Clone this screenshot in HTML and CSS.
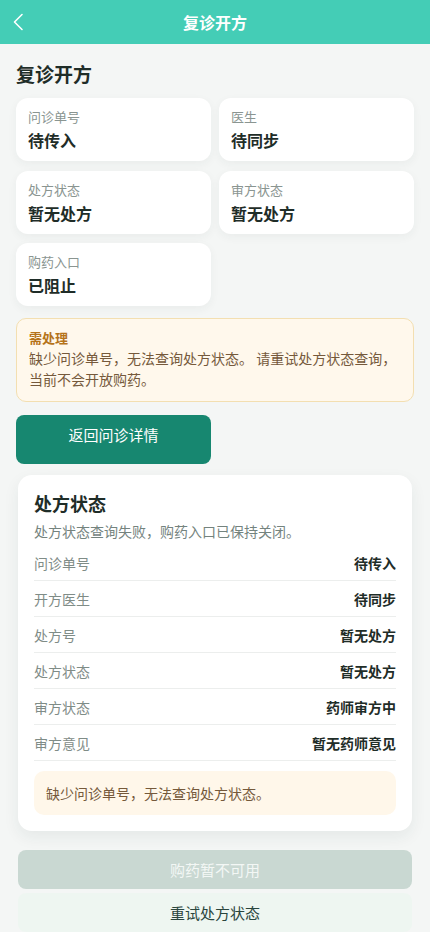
FILE: index.html
```html
<!DOCTYPE html>
<html lang="zh-CN">
<head>
<meta charset="utf-8">
<meta name="viewport" content="width=device-width, initial-scale=1">
<title>复诊开方</title>
<link rel="stylesheet" href="styles.css">
</head>
<body>
<header class="topbar">
  <button class="back" aria-label="返回">
    <svg width="12" height="18" viewBox="0 0 12 18"><path d="M10 1.5 L2.5 9 L10 16.5" fill="none" stroke="#fff" stroke-width="1.6" stroke-linecap="round" stroke-linejoin="round"/></svg>
  </button>
  <div class="topbar-title">复诊开方</div>
</header>
<main class="page">
  <h1 class="page-title">复诊开方</h1>
  <div class="stats">
    <div class="stat"><div class="stat-label">问诊单号</div><div class="stat-value">待传入</div></div>
    <div class="stat"><div class="stat-label">医生</div><div class="stat-value">待同步</div></div>
    <div class="stat"><div class="stat-label">处方状态</div><div class="stat-value">暂无处方</div></div>
    <div class="stat"><div class="stat-label">审方状态</div><div class="stat-value">暂无处方</div></div>
    <div class="stat"><div class="stat-label">购药入口</div><div class="stat-value">已阻止</div></div>
  </div>
  <div class="alert">
    <div class="alert-title">需处理</div>
    <div class="alert-text">缺少问诊单号，无法查询处方状态。 请重试处方状态查询，当前不会开放购药。</div>
  </div>
  <button class="btn-primary">返回问诊详情</button>
  <section class="card">
    <h2 class="card-title">处方状态</h2>
    <p class="card-sub">处方状态查询失败，购药入口已保持关闭。</p>
    <div class="rows">
      <div class="row"><span class="row-k">问诊单号</span><span class="row-v">待传入</span></div>
      <div class="row"><span class="row-k">开方医生</span><span class="row-v">待同步</span></div>
      <div class="row"><span class="row-k">处方号</span><span class="row-v">暂无处方</span></div>
      <div class="row"><span class="row-k">处方状态</span><span class="row-v">暂无处方</span></div>
      <div class="row"><span class="row-k">审方状态</span><span class="row-v">药师审方中</span></div>
      <div class="row"><span class="row-k">审方意见</span><span class="row-v">暂无药师意见</span></div>
    </div>
    <div class="note">缺少问诊单号，无法查询处方状态。</div>
  </section>
  <div class="actions">
    <button class="btn-disabled" disabled>购药暂不可用</button>
    <button class="btn-soft">重试处方状态</button>
  </div>
</main>
</body>
</html>
```
FILE: styles.css
```css
* { box-sizing: border-box; }
html, body { margin: 0; padding: 0; }
body {
  background: #f4f6f5;
  font-family: "Noto Sans CJK SC", "Noto Sans", sans-serif;
  color: #1f2d28;
}
button { font-family: inherit; border: 0; cursor: pointer; }
.topbar {
  height: 44px;
  background: #44cdb6;
  display: flex;
  align-items: center;
  justify-content: center;
  position: relative;
}
.back {
  position: absolute;
  left: 12px;
  top: 13px;
  width: 14px;
  height: 18px;
  padding: 0;
  background: transparent;
  display: flex;
}
.topbar-title {
  color: #fff;
  font-size: 16px;
  font-weight: 700;
}
.page { padding: 16px 16px 0; }
.page-title {
  margin: 0 0 10px;
  font-size: 19px;
  line-height: 28px;
  font-weight: 700;
  color: #1f2d28;
}
.stats {
  display: grid;
  grid-template-columns: 1fr 1fr;
  gap: 9.5px 8px;
}
.stat {
  background: #fff;
  border-radius: 12px;
  padding: 9px 12px 8px;
  height: 63px;
  box-shadow: 0 3px 10px rgba(30, 60, 50, 0.05);
}
.stat-label { font-size: 13px; line-height: 20px; color: #8a9591; }
.stat-value { font-size: 16px; line-height: 26px; font-weight: 700; color: #1f2d28; }
.alert {
  margin-top: 12px;
  background: #fff8ec;
  border: 1px solid #f3dfb1;
  border-radius: 10px;
  padding: 9px 12px 11px;
}
.alert-title { font-size: 13px; line-height: 20px; font-weight: 700; color: #b5731a; }
.alert-text { font-size: 14px; line-height: 21px; color: #75593b; }
.btn-primary {
  margin-top: 13px;
  width: 195px;
  height: 49px;
  border-radius: 8px;
  background: #178770;
  color: #fff;
  font-size: 15px;
  padding: 0 0 10px;
  display: block;
}
.card {
  margin: 11px 2px 0;
  background: #fff;
  border-radius: 14px;
  padding: 14px 16px 16px;
  box-shadow: 0 6px 16px rgba(30, 60, 50, 0.07);
}
.card-title { margin: 0; font-size: 18px; line-height: 28px; font-weight: 700; color: #1f2d28; }
.card-sub { margin: 4px 0 4px; font-size: 14px; line-height: 20px; color: #74837e; }
.row {
  display: flex;
  justify-content: space-between;
  align-items: center;
  height: 36px;
  border-bottom: 1px solid #eceeed;
  font-size: 14px;
}
.row-k { color: #7f8c87; }
.row-v { font-weight: 700; color: #1f2d28; }
.note {
  margin-top: 10px;
  background: #fff7ea;
  border-radius: 10px;
  padding: 11px 12px;
  font-size: 14px;
  line-height: 22px;
  color: #75593b;
}
.actions {
  margin: 19px 2px 0;
  display: flex;
  flex-direction: column;
  gap: 4px;
}
.btn-disabled {
  height: 39px;
  border-radius: 8px;
  background: #c9d8d2;
  color: #f3f7f5;
  font-size: 15px;
}
.btn-soft {
  height: 39px;
  border-radius: 8px;
  background: #eef6f1;
  color: #2a453d;
  font-size: 15px;
}
```
